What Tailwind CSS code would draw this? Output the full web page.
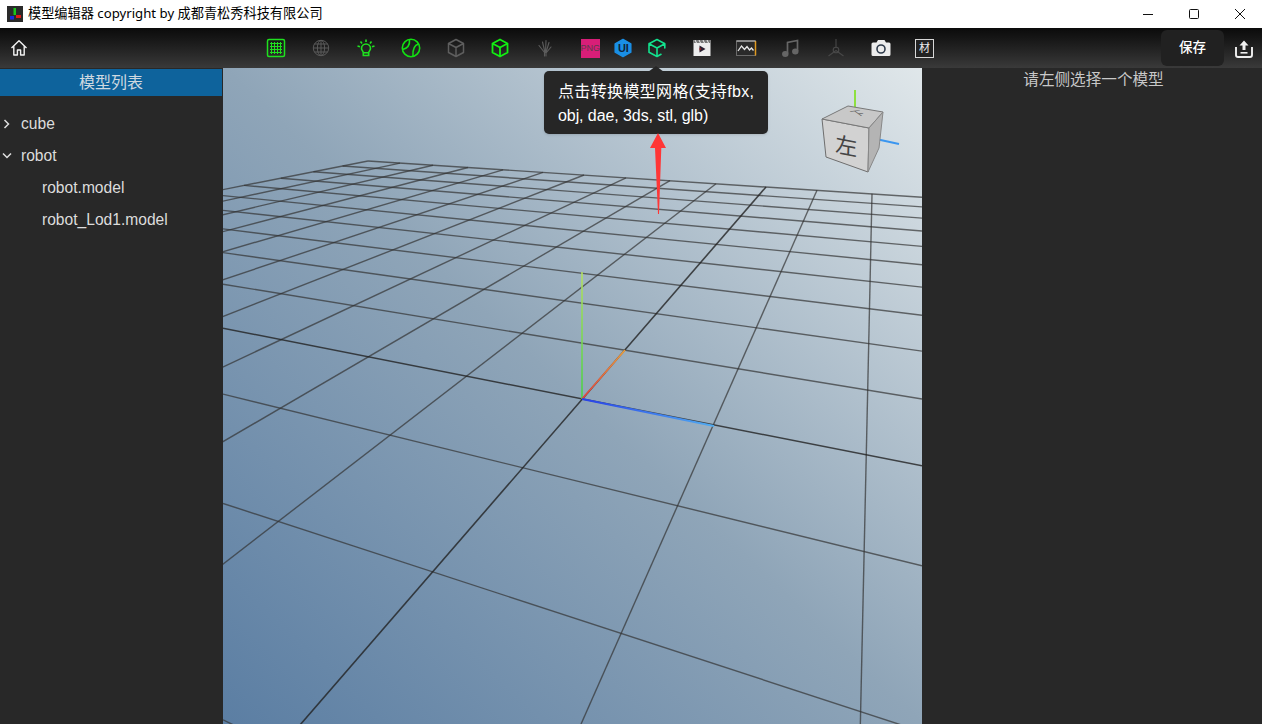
<!DOCTYPE html>
<html lang="zh">
<head>
<meta charset="utf-8">
<title>模型编辑器</title>
<script src="https://cdn.jsdelivr.net/npm/@tailwindcss/browser@4"></script>
</head>
<body class="overflow-hidden">
<div class="relative flex h-[724px] w-[1262px] flex-col overflow-hidden bg-[#282828] font-['Liberation_Sans','Noto_Sans_CJK_SC',sans-serif]">

  <!-- Title bar -->
  <header class="flex h-[28px] shrink-0 items-center bg-white pl-[7px] text-black">
    <svg class="h-4 w-4 shrink-0" viewBox="0 0 16 16"><rect width="16" height="16" fill="#2a2a2a"/><rect x="6.5" y="2" width="2.5" height="7" fill="#18c818"/><rect x="9" y="9" width="5" height="3" fill="#e01818"/><rect x="3" y="10" width="4" height="3.5" fill="#1828e0"/></svg>
    <span class="ml-[5px] font-['Noto_Sans','Noto_Sans_CJK_SC',sans-serif] text-[13.2px] leading-none">模型编辑器 copyright by 成都青松秀科技有限公司</span>
    <div class="ml-auto -mr-px flex items-center">
      <div class="flex h-[28px] w-[46px] items-center justify-center"><svg class="h-3 w-3" viewBox="0 0 12 12"><path d="M1 6.5h10" stroke="#111" stroke-width="1"/></svg></div>
      <div class="flex h-[28px] w-[46px] items-center justify-center"><svg class="h-3 w-3" viewBox="0 0 12 12"><rect x="1.5" y="1.5" width="9" height="9" rx="1" fill="none" stroke="#111" stroke-width="1"/></svg></div>
      <div class="flex h-[28px] w-[46px] items-center justify-center"><svg class="h-3 w-3" viewBox="0 0 12 12"><path d="M1 1l10 10M11 1L1 11" stroke="#111" stroke-width="1"/></svg></div>
    </div>
  </header>

  <!-- Toolbar -->
  <nav class="relative flex h-10 shrink-0 items-center bg-linear-to-b from-[#0b0b0b] to-[#3a3a3a] text-white">
    <div class="flex w-[38px] shrink-0 justify-center">
      <svg class="h-[18px] w-[18px]" viewBox="0 0 18 18" fill="none" stroke="#f2f2f2" stroke-width="1.4" stroke-linejoin="round"><path d="M1.5 9L9 1.8 16.5 9M3.8 7.2V16h3.6v-5h3.2v5h3.6V7.2"/></svg>
    </div>
    <div class="ml-[227px] flex items-center gap-[22.9px]">
      <svg class="h-[22px] w-[22px]" viewBox="0 0 22 22" fill="none" stroke="#1fe01f"><rect x="2.5" y="2.5" width="17" height="17" rx="1.5" stroke-width="1.5"/><path d="M6.5 5v12M9.5 5v12M12.5 5v12M15.5 5v12M5 6.5h12M5 9.5h12M5 12.5h12M5 15.5h12" stroke-width="1"/></svg>
      <svg class="h-[22px] w-[22px]" viewBox="0 0 22 22" fill="none" stroke="#5a5a5a" stroke-width="1"><circle cx="11" cy="11" r="7.7"/><ellipse cx="11" cy="11" rx="3.6" ry="7.7"/><path d="M11 3.3v15.4M3.3 11h15.4M4.5 7h13M4.500 15h13"/></svg>
      <svg class="h-[22px] w-[22px]" viewBox="0 0 22 22" fill="none" stroke="#1fe01f" stroke-width="1.6"><path d="M6.500 11.500a4.500 4.500 0 1 1 9 0c0 1.700-1.500 2.400-1.800 4.200v2.800H8.300v-2.800C8 13.900 6.500 13.200 6.500 11.500z"/><path d="M11 2.500v2.500M5.500 4.500l1.500 2M16.500 4.500L15 6.500M2.500 9l2.500 .8M19.500 9L17 9.800M8.300 15.700h5.400"/></svg>
      <svg class="h-[22px] w-[22px]" viewBox="0 0 22 22" fill="none" stroke="#12e012" stroke-width="1.6"><circle cx="11" cy="11" r="8.700"/><path d="M9.500 2.500C10 8 7 11.500 2.500 12.500M18.500 7C15 8 12.500 12 13 19"/></svg>
      <svg class="h-[22px] w-[22px]" viewBox="0 0 22 22" fill="none" stroke="#5e5e5e" stroke-width="1.500" stroke-linejoin="round"><path d="M11 2.500l7.500 4v9l-7.500 4-7.500-4v-9zM3.500 6.500l7.500 4 7.500-4M11 10.500v9"/></svg>
      <svg class="h-[22px] w-[22px]" viewBox="0 0 22 22" fill="none" stroke="#12f012" stroke-width="1.800" stroke-linejoin="round"><path d="M11 2.500l7.500 4v9l-7.500 4-7.500-4v-9zM3.500 6.500l7.500 4 7.500-4M11 10.500v9"/></svg>
      <svg class="h-[22px] w-[22px]" viewBox="0 0 22 22" fill="none" stroke="#5c5c5c" stroke-width="1.100" stroke-linecap="round"><path d="M10.500 19v-3.500M12 19v-3.500M10.500 15.500L5 8.500M11 15.500L8.500 5M11.500 15.500l.5-12M12 15.500l3-10M12.500 15.500l4.500-5.500"/></svg>
      <div class="flex items-center gap-[11.2px]">
        <div class="flex h-[19px] w-[22px] items-center justify-center"><span class="flex h-[19px] w-[19px] items-center justify-center bg-[#d81e78] text-[9px] leading-none text-[#5a3a4a]">PNG</span></div>
        <div class="relative flex h-[22px] w-[22px] items-center justify-center">
          <svg class="absolute inset-0 h-[22px] w-[22px]" viewBox="0 0 22 22"><path d="M11 2.500l7.800 4.300v8.400L11 19.500l-7.800-4.300V6.800z" fill="#1a8fe6" stroke="#1a8fe6" stroke-width="1.500" stroke-linejoin="round"/></svg>
          <span class="relative text-[11px] font-bold leading-none text-[#10233a]">UI</span>
        </div>
        <svg class="h-[22px] w-[22px]" viewBox="0 0 22 22" fill="none" stroke="#12e28e" stroke-width="1.600" stroke-linejoin="round" stroke-linecap="round"><path d="M18.800 11V6.700L11 2.500 3 6.700v8.600l8 4.200 4-2.200M3 6.700l8 4.300 7.800-4.300M11 11v8.500"/></svg>
      </div>
      <svg class="h-[22px] w-[22px]" viewBox="0 0 22 22"><rect x="2.500" y="3" width="17" height="16" fill="#ededed"/><rect x="2.500" y="3" width="17" height="3" fill="#777"/><path d="M4 3l1.500 3M8 3l1.500 3M12 3l1.500 3M16 3l1.500 3" stroke="#eee" stroke-width="1"/><path d="M8.500 8.500l6 3.500-6 3.500z" fill="#2a2030"/><path d="M8.500 10.500l2 1.500-2 1.500z" fill="#a02020"/></svg>
      <svg class="h-[22px] w-[22px]" viewBox="0 0 22 22" fill="none"><rect x="1.500" y="4" width="19" height="14.500" fill="#2a2a2a" stroke="#6a6a6a"/><path d="M20.500 4v14.500" stroke="#e09a20" stroke-width="1.500"/><path d="M1.500 4h19" stroke="#ccc"/><path d="M3 14l3.500-5 3 3.500 2.500-3 2.500 3.500 2-2 2 2.500" stroke="#e8e8e8" stroke-width="1.300"/></svg>
      <svg class="h-[22px] w-[22px]" viewBox="0 0 22 22" fill="none" stroke="#666" stroke-width="1.700"><path d="M7.500 16.500V5.500L17.500 3.500V14"/><ellipse cx="5.300" cy="17" rx="2.400" ry="2.100" fill="#666"/><ellipse cx="15.300" cy="14.500" rx="2.400" ry="2.100" fill="#666"/></svg>
      <svg class="h-[22px] w-[22px]" viewBox="0 0 22 22" fill="none" stroke="#484848" stroke-width="1.100"><path d="M11 2v9M11 13.500L3.500 19M11 13.500L18.500 19"/><circle cx="11" cy="13" r="2.800"/></svg>
      <svg class="h-[22px] w-[22px]" viewBox="0 0 22 22"><path d="M1.500 7a1.500 1.500 0 0 1 1.500-1.500h3.500L8 3h6.500l1.500 2.500h3a1.500 1.500 0 0 1 1.500 1.500v10.500a1.500 1.500 0 0 1-1.500 1.500H3a1.500 1.500 0 0 1-1.500-1.500z" fill="#ececec"/><circle cx="11" cy="12" r="4" fill="none" stroke="#2e3a4a" stroke-width="1.600"/></svg>
      <div class="flex h-[19px] w-[19px] items-center justify-center border border-[#d8d8d8] bg-[#222] text-[11px] leading-none text-[#eee]">材</div>
    </div>
    <button class="absolute left-[1161px] top-[2px] flex h-9 w-[63px] items-center justify-center rounded-md bg-[#212121] text-[13.5px] font-medium text-white">保存</button>
    <div class="absolute left-[1234px] top-[11px]">
      <svg class="h-[20px] w-[20px]" viewBox="0 0 20 20" fill="none" stroke="#f0f0f0" stroke-width="1.900"><path d="M2 8v8a2 2 0 0 0 2 2h12a2 2 0 0 0 2-2V8"/><path d="M10 1.500l4.500 5h-3V11h-3V6.500h-3z" fill="#f0f0f0" stroke="none"/><path d="M6.500 13.800h7" stroke-width="1.600"/></svg>
    </div>
  </nav>

  <!-- Body -->
  <main class="flex min-h-0 flex-1">
    <aside class="w-[223px] shrink-0 bg-[#282828] pt-px pr-px text-[#dcdcdc]">
      <h2 class="flex h-[27px] items-center justify-center bg-[#0e639c] pt-px text-base font-normal leading-none text-[#cfd9e0]">模型列表</h2>
      <ul class="mt-3 text-[15.6px]">
        <li class="flex h-8 items-center">
          <svg class="ml-[3px] mr-[10px] h-2.5 w-2 shrink-0" viewBox="0 0 8 10" fill="none" stroke="#e0e0e0" stroke-width="1.500"><path d="M1.500 1l4 4-4 4"/></svg>
          <span>cube</span>
        </li>
        <li class="flex h-8 items-center">
          <svg class="ml-[2px] mr-[9px] h-2 w-2.5 shrink-0" viewBox="0 0 10 8" fill="none" stroke="#e0e0e0" stroke-width="1.500"><path d="M1 1.500l4 4 4-4"/></svg>
          <span>robot</span>
        </li>
        <li class="flex h-8 items-center pl-[42px]">robot.model</li>
        <li class="flex h-8 items-center pl-[42px]">robot_Lod1.model</li>
      </ul>
    </aside>

    <section class="relative min-w-0 flex-1 overflow-hidden bg-linear-to-tr from-[#5b7ea3] via-[#8fa5b8] to-[#e0e7ea]">
      <svg class="absolute inset-0 h-[656px] w-[699px]" viewBox="223 68 699 656" fill="none">
        <defs>
          <linearGradient id="gy" gradientUnits="userSpaceOnUse" x1="582" y1="399" x2="582" y2="272"><stop offset="0" stop-color="#48d048"/><stop offset="1" stop-color="#b4e060"/></linearGradient>
          <linearGradient id="gr" gradientUnits="userSpaceOnUse" x1="582" y1="399" x2="625" y2="350"><stop offset="0" stop-color="#e04040"/><stop offset="1" stop-color="#e8a040"/></linearGradient>
          <linearGradient id="gb" gradientUnits="userSpaceOnUse" x1="582" y1="399" x2="714" y2="426"><stop offset="0" stop-color="#2840e8"/><stop offset="1" stop-color="#50acf0"/></linearGradient>
        </defs>
        <g stroke="#333" stroke-opacity="0.7" stroke-width="1.400">
          <line x1="368" y1="161" x2="-2568" y2="740"/>
          <line x1="400" y1="163.100" x2="-2284" y2="740"/>
          <line x1="433" y1="165.200" x2="-2005" y2="740"/>
          <line x1="468" y1="167.500" x2="-1720" y2="740"/>
          <line x1="503" y1="169.800" x2="-1446" y2="740"/>
          <line x1="543" y1="172.400" x2="-1149" y2="740"/>
          <line x1="584" y1="175" x2="-858" y2="740"/>
          <line x1="626" y1="177.800" x2="-572" y2="740"/>
          <line x1="670" y1="180.700" x2="-288" y2="740"/>
          <line x1="716" y1="183.700" x2="-5" y2="740"/>
          <line x1="817" y1="190.300" x2="574" y2="740"/>
          <line x1="872" y1="193.800" x2="860" y2="740"/>
          <line x1="368" y1="161" x2="922" y2="197.300"/>
          <line x1="342.600" y1="166" x2="922" y2="206.900"/>
          <line x1="313.400" y1="171.800" x2="922" y2="218.100"/>
          <line x1="280.900" y1="178.200" x2="922" y2="231"/>
          <line x1="244" y1="185.400" x2="922" y2="246.400"/>
          <line x1="223" y1="195.600" x2="922" y2="264.700"/>
          <line x1="223" y1="210.400" x2="922" y2="287.100"/>
          <line x1="223" y1="228.900" x2="922" y2="315.200"/>
          <line x1="223" y1="252.600" x2="922" y2="351.100"/>
          <line x1="223" y1="284.200" x2="922" y2="399"/>
          <line x1="223" y1="394.100" x2="922" y2="565.800"/>
          <line x1="223" y1="503.400" x2="922" y2="731.700"/>
          <line x1="223" y1="719.800" x2="922" y2="1060"/>
        </g>
        <g stroke="#222" stroke-opacity="0.8" stroke-width="1.600">
          <line x1="223" y1="328.200" x2="922" y2="465.800"/>
          <line x1="766" y1="187" x2="287" y2="740"/>
        </g>
        <line x1="582" y1="399" x2="582" y2="272" stroke="url(#gy)" stroke-width="1.600"/>
        <line x1="582" y1="399" x2="625" y2="350" stroke="url(#gr)" stroke-width="1.800"/>
        <line x1="582" y1="399" x2="714" y2="426" stroke="url(#gb)" stroke-width="2.100"/>

        <!-- orientation cube -->
        <line x1="855" y1="90" x2="855" y2="113" stroke="#8ee040" stroke-width="2"/>
        <line x1="876" y1="139" x2="899" y2="144" stroke="#3a96f0" stroke-width="1.800"/>
        <path d="M822 119L869 128L868 172L826 157z" fill="#d2d2d2" stroke="#6e6e6e" stroke-width="1"/>
        <path d="M822 119L848 106L883 112L869 128z" fill="#c8c8c8" stroke="#787878" stroke-width="1"/>
        <path d="M869 128L883 112L879 148L868 172z" fill="#b4b4b4" stroke="#888" stroke-width="1"/>
        <text transform="matrix(1 0.19 -0.03 1 846 154)" text-anchor="middle" font-size="22" fill="#444" font-family="'Noto Sans CJK SC',sans-serif">左</text>
        <text transform="matrix(0.9 -0.1 -0.7 -0.5 855 111)" text-anchor="middle" font-size="12" fill="#555" font-family="'Noto Sans CJK SC',sans-serif">上</text>
      </svg>
    </section>

    <aside class="w-[340px] shrink-0 bg-[#282828] pt-[3px] pl-[3px] text-center text-[15.6px] leading-[18px] text-[#c8c8c8]">
      请左侧选择一个模型
    </aside>
  </main>

  <!-- Tooltip -->
  <div class="absolute left-[544px] top-[71px] h-[63px] w-[224px] rounded-[5px] bg-[#262626] px-[14px] pt-[8.5px] text-base leading-6 text-white shadow-sm">
    <span class="absolute -top-[5px] left-[104px] h-0 w-0 border-x-[8px] border-b-[6px] border-x-transparent border-b-[#262626]"></span>
    <p class="whitespace-nowrap"><span class="tracking-[0.35px]">点击转换模型网格(支持fbx,</span><br><span class="tracking-[-0.08px]">obj, dae, 3ds, stl, glb)</span></p>
  </div>
  <svg class="absolute left-[648px] top-[131px] h-[85px] w-5" viewBox="0 0 20 85"><path d="M10 2L18 17H13.300L11 83H10L7 17H2z" fill="#ff3636"/></svg>
</div>
</body>
</html>
